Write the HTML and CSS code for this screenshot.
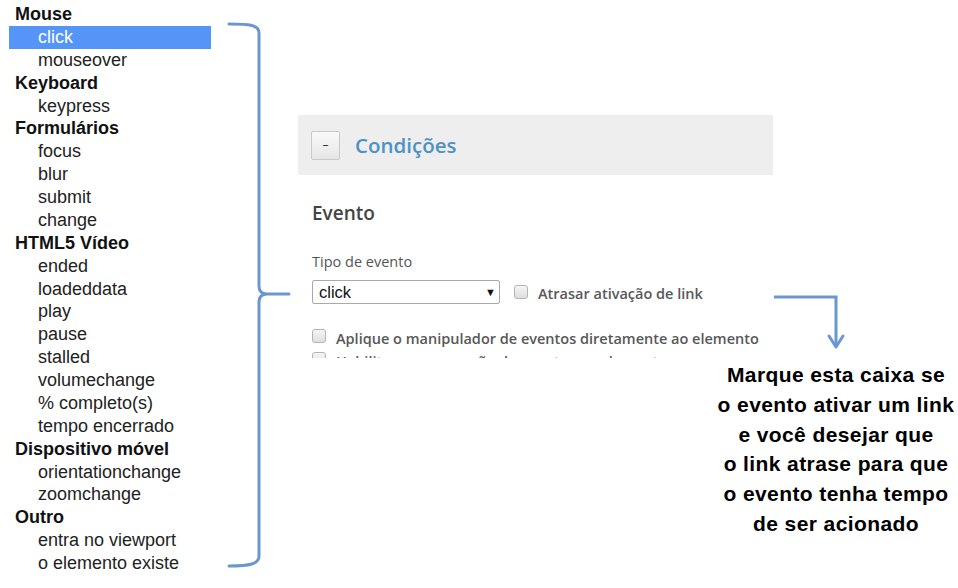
FILE: index.html
```html
<!DOCTYPE html>
<html lang="pt">
<head>
<meta charset="utf-8">
<link rel="stylesheet" href="styles.css">
</head>
<body>
<div class="page">
  <ul class="events">
    <li class="cat">Mouse</li>
    <li class="item selected">click</li>
    <li class="item">mouseover</li>
    <li class="cat">Keyboard</li>
    <li class="item">keypress</li>
    <li class="cat">Formulários</li>
    <li class="item">focus</li>
    <li class="item">blur</li>
    <li class="item">submit</li>
    <li class="item">change</li>
    <li class="cat">HTML5 Vídeo</li>
    <li class="item">ended</li>
    <li class="item">loadeddata</li>
    <li class="item">play</li>
    <li class="item">pause</li>
    <li class="item">stalled</li>
    <li class="item">volumechange</li>
    <li class="item">% completo(s)</li>
    <li class="item">tempo encerrado</li>
    <li class="cat">Dispositivo móvel</li>
    <li class="item">orientationchange</li>
    <li class="item">zoomchange</li>
    <li class="cat">Outro</li>
    <li class="item">entra no viewport</li>
    <li class="item">o elemento existe</li>
  </ul>

  <div class="main">
    <div class="panel">
      <div class="panel-head">
        <span class="toggle">–</span>
        <span class="panel-title">Condições</span>
      </div>
      <div class="panel-body">
        <h2 class="section">Evento</h2>
        <div class="label">Tipo de evento</div>
        <div class="row">
          <div class="select"><span>click</span><span class="caret">▼</span></div>
          <label class="check"><span class="box"></span>Atrasar ativação de link</label>
        </div>
        <label class="check row2"><span class="box"></span>Aplique o manipulador de eventos diretamente ao elemento</label>
        <label class="check row3"><span class="box"></span>Habilitar a propagação de eventos ao elemento</label>
      </div>
    </div>
  </div>

  <svg class="bracket" width="300" height="588" viewBox="0 0 300 588">
    <path d="M229 24 C250 24 259 25 259 33 V286 Q259 294 267 294 H289 M267 294 Q259 294 259 302 V556 C259 564 250 566 229 566" fill="none" stroke="#6b97cf" stroke-width="3" stroke-linecap="round"/>
  </svg>
  <svg class="pointer" width="90" height="70" viewBox="0 0 90 70">
    <path d="M4 7 H66 V56" fill="none" stroke="#6b97cf" stroke-width="3"/>
    <path d="M59 46 L66 57 L73 46" fill="none" stroke="#6b97cf" stroke-width="3" stroke-linecap="round" stroke-linejoin="round"/>
  </svg>
  <p class="callout">Marque esta caixa se<br>o evento ativar um link<br>e você desejar que<br>o link atrase para que<br>o evento tenha tempo<br>de ser acionado</p>
</div>
</body>
</html>
```

FILE: styles.css
```css
html, body {
  margin: 0;
  padding: 0;
  background: #ffffff;
}

.page {
  position: relative;
  width: 958px;
  height: 588px;
  overflow: hidden;
  display: flex;
  align-items: flex-start;
}

.events {
  list-style: none;
  margin: 0;
  padding: 3px 0 0 9px;
  width: 202px;
  font-family: "Liberation Sans", Arial, sans-serif;
  font-size: 18px;
  line-height: 22.875px;
}

.events li {
  height: 22.875px;
  white-space: nowrap;
}

.cat {
  font-weight: bold;
  color: #111;
  padding-left: 6px;
}

.item {
  color: #222;
  padding-left: 29px;
}

.item.selected {
  background: #5495f7;
  color: #ffffff;
}

.main {
  margin-left: 87px;
  padding-top: 115px;
}

.panel {
  width: 475px;
  font-family: "Open Sans", "Noto Sans", sans-serif;
}

.panel-head {
  height: 60px;
  background: #eeeeee;
  display: flex;
  align-items: center;
  padding-left: 13px;
  gap: 15px;
}

.toggle {
  width: 27px;
  height: 27px;
  border: 1px solid #c9c9c9;
  border-radius: 2px;
  background: linear-gradient(#fafafa, #e6e6e6);
  display: flex;
  align-items: center;
  justify-content: center;
  font-size: 12px;
  color: #333;
  line-height: 1;
}

.panel-title {
  font-size: 20.5px;
  font-weight: 600;
  color: #4d92c5;
}

.panel-body {
  padding-left: 14px;
  height: 183px;
  overflow: hidden;
}

.section {
  margin: 25px 0 0 0;
  font-size: 19px;
  line-height: 27px;
  font-weight: 600;
  color: #444;
}

.label {
  margin-top: 25px;
  font-size: 14.5px;
  line-height: 20px;
  color: #555;
}

.row {
  margin-top: 8px;
  display: flex;
  align-items: center;
  gap: 14px;
}

.select {
  height: 22px;
  border: 1px solid #a9a9a9;
  border-radius: 2px;
  display: flex;
  align-items: center;
  justify-content: space-between;
  padding: 0 0 0 6px;
  box-sizing: content-box;
  font-family: "Liberation Sans", Arial, sans-serif;
  font-size: 16.5px;
  color: #111;
  width: 180px;
}

.caret {
  font-size: 11px;
  margin-right: 3px;
}

.check {
  display: flex;
  align-items: center;
  gap: 10px;
  font-size: 14.5px;
  font-weight: 600;
  color: #585858;
  line-height: 20px;
  white-space: nowrap;
}

.box {
  width: 12px;
  height: 12px;
  border: 1px solid #b3b3b3;
  border-radius: 3px;
  background: linear-gradient(#f6f6f6, #dedede);
  position: relative;
  top: -3px;
}

.row .check .box {
  top: -2px;
}

.row .check {
  position: relative;
  top: 2px;
}

.row2 {
  margin-top: 25px;
}

.row3 {
  margin-top: 3px;
}

.bracket {
  position: absolute;
  left: 0;
  top: 0;
}

.pointer {
  position: absolute;
  left: 770px;
  top: 290px;
}

.callout {
  position: absolute;
  left: 700px;
  top: 360px;
  width: 272px;
  margin: 0;
  text-align: center;
  font-family: "Liberation Sans", Arial, sans-serif;
  font-weight: bold;
  font-size: 21px;
  line-height: 29.8px;
  letter-spacing: 0.4px;
  color: #000;
}
```
